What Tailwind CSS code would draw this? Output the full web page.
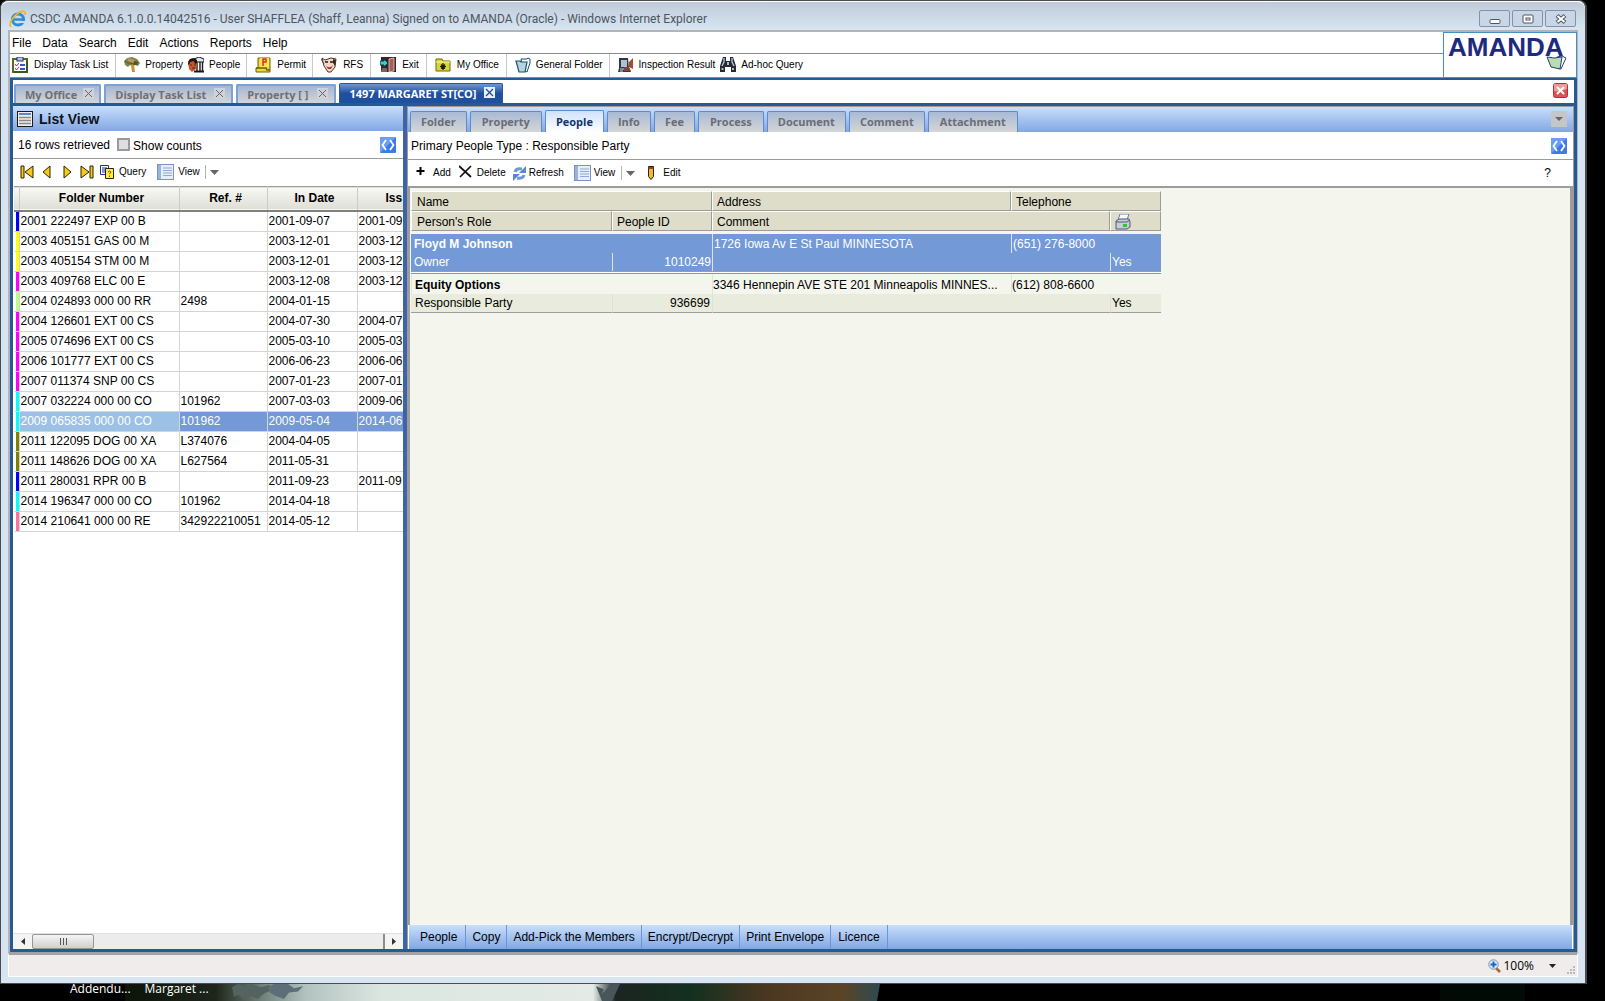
<!DOCTYPE html>
<html lang="en">
  <head>
    <meta charset="UTF-8" />
    <meta name="viewport" content="width=device-width, initial-scale=1.0" />
    <title>CSDC AMANDA 6.1.0.0.14042516</title>
    <script src="https://cdn.jsdelivr.net/npm/@tailwindcss/browser@4"></script>
  </head>

  <body
    class="h-screen overflow-hidden bg-black flex flex-col text-[12px] leading-4 text-black font-['Liberation_Sans',Arial,sans-serif]"
  >
    <!-- Browser window -->
    <div
      class="flex-1 min-h-0 mr-[18px] flex flex-col rounded-t-lg border-2 border-[#4b4b4f] border-b bg-[#d7e4f2] px-[7px] pb-[6px] border-l-1 border-t-1"
    >
      <!-- Title bar -->
      <header
        class="h-[29px] shrink-0 -mx-[7px] px-[8px] flex items-center rounded-t-lg border-t border-white bg-linear-to-b from-[#bfcbd9] to-[#d8e5f2]"
      >
        <svg class="w-[18px] h-[18px] mt-[5px]" viewBox="0 0 18 18">
          <circle cx="9" cy="9.500" r="5.600" fill="none" stroke="#2b8fd8" stroke-width="3" />
          <path d="M5 9.500h10" stroke="#2b8fd8" stroke-width="2.500" />
          <path d="M11 11h6v2h-6z" fill="#cfdbe8" />
          <path d="M2 17C-1 14 4 6 10 2.500C14 .500 17 1 16 5" fill="none" stroke="#f0b51c" stroke-width="1.600" />
        </svg>
        <h1 class="ml-[3px] mt-[5px] text-[12px] text-[#4c5660] font-['Roboto','Open_Sans',sans-serif]">
          CSDC AMANDA 6.1.0.0.14042516 - User SHAFFLEA (Shaff, Leanna) Signed on to AMANDA (Oracle) - Windows Internet Explorer
        </h1>
        <div class="ml-auto mr-[1px] mt-[5px] flex gap-[2px]">
          <button aria-label="Minimize" class="w-[31px] h-[17px] rounded-xs border border-[#8391ab] bg-[#c9d6e6] flex items-center justify-center">
            <svg class="w-[12px] h-[12px]" viewBox="0 0 12 12"><rect x="1" y="6.500" width="10" height="4" rx="1" fill="#fff" stroke="#4d5567" /></svg>
          </button>
          <button aria-label="Maximize" class="w-[31px] h-[17px] rounded-xs border border-[#8391ab] bg-[#c9d6e6] flex items-center justify-center">
            <svg class="w-[12px] h-[12px]" viewBox="0 0 12 12"><rect x="1" y="2" width="10" height="8" rx="1" fill="#fff" stroke="#4d5567" /><rect x="4" y="5" width="4" height="2" fill="#fff" stroke="#4d5567" /></svg>
          </button>
          <button aria-label="Close" class="w-[31px] h-[17px] rounded-xs border border-[#8391ab] bg-[#c9d6e6] flex items-center justify-center">
            <svg class="w-[12px] h-[12px]" viewBox="0 0 12 12"><path d="M2 2.500l8 7M10 2.500l-8 7" stroke="#4d5567" stroke-width="4" /><path d="M2.500 3l7 6M9.500 3l-7 6" stroke="#fff" stroke-width="2" /></svg>
          </button>
        </div>
      </header>

      <!-- Page area -->
      <div class="flex-1 min-h-0 flex flex-col border-2 border-[#b4b3b5] border-b-0 border-r-1 bg-white">
        <!-- Menu + toolbar + logo -->
        <div class="shrink-0 flex">
          <div class="flex-1 min-w-0 flex flex-col">
            <nav class="h-[22px] flex items-center gap-[11px] px-[2px] border-b border-[#6d8fc8]">
              <button>File</button>
              <button>Data</button>
              <button>Search</button>
              <button>Edit</button>
              <button>Actions</button>
              <button>Reports</button>
              <button>Help</button>
            </nav>
            <div class="h-[24px] flex text-[10px] leading-3 border-b border-[#6d8fc8]">
              <div class="flex items-center pb-[2px] pl-[2px] pr-[7px] border-r border-[#c9c9c4]">
                <button class="flex items-center gap-[6px]">
                  <svg class="w-4 h-4" viewBox="0 0 16 16"><rect x="1" y="2" width="14" height="13" fill="#fff" stroke="#4f6b1d" stroke-width="2" /><path d="M2 15h13V3" fill="none" stroke="#1d4a2b" /><rect x="5" y="0" width="6" height="4" fill="#b9c4ef" stroke="#26306b" /><path d="M3 7l1.500 2L7 6M3 11l1.500 2L7 10" fill="none" stroke="#c2267c" /><path d="M8 8h5M8 12h5" stroke="#3a57c4" stroke-width="2" /></svg>
                  Display Task List
                </button>
              </div>
              <div class="flex items-center gap-[5px] pb-[2px] pl-[8px] pr-[6px] border-r border-[#c9c9c4]">
                <button class="flex items-center gap-[5px]">
                  <svg class="w-4 h-4" viewBox="0 0 16 16"><path d="M0 4l3-3 5-1 5 2 3 4-2 3-3-1-2 2-3-2-2 2-3-2z" fill="#758a45" /><path d="M3 1l4 1 4 1-2 3-4-1z" fill="#b99a62" /><path d="M10 4l4 1-1 3-3 0z" fill="#4d5a29" /><path d="M7 8h3l1 7H8z" fill="#d98a33" /><path d="M1 4l3 2 3 0 3 1 4-2" fill="none" stroke="#7c4226" /></svg>
                  Property
                </button>
                <button class="flex items-center gap-[5px]">
                  <svg class="w-4 h-4" viewBox="0 0 16 16"><path d="M6 4V2l5-2 5 2v3H6z" fill="#dfe4ea" stroke="#1a1a1a" /><path d="M9 5v9M12 5v9M14.500 5v9" stroke="#1a1a1a" stroke-width="1.400" /><path d="M6 14.500h10" stroke="#1a1a1a" stroke-width="2" /><path d="M0 6q1-5 6-4 4 1 3 6l-1 4-4 3-3-3z" fill="#c4572d" /><path d="M0 7q0-6 6-6l3 2v3l-2 1-1-3-4 1-1 3z" fill="#1b1310" /><path d="M2 8h2M6 8h2M4 11h3" stroke="#6d1f0c" /></svg>
                  People
                </button>
              </div>
              <div class="flex items-center pb-[2px] pl-[8px] pr-[6px] border-r border-[#c9c9c4]">
                <button class="flex items-center gap-[6px]">
                  <svg class="w-4 h-4" viewBox="0 0 16 16"><path d="M3 1h12v14H1v-4h2z" fill="#e8d838" stroke="#6b6309" /><rect x="5" y="1" width="9" height="9" fill="#f8e75b" /><path d="M8 9V2h3v3H8" fill="none" stroke="#cf3226" stroke-width="1.500" /><path d="M1 11h10l1 2h3" fill="none" stroke="#6b6309" stroke-width="1.500" /></svg>
                  Permit
                </button>
              </div>
              <div class="flex items-center pb-[2px] pl-[8px] pr-[7px] border-r border-[#c9c9c4]">
                <button class="flex items-center gap-[6px]">
                  <svg class="w-4 h-4" viewBox="0 0 16 16"><path d="M1 1l3 2 6-2 5 1-1 8-4 5H7L3 9z" fill="#f4d6c6" stroke="#473830" /><path d="M12 2l3 1-1 6-2-3z" fill="#372a24" /><path d="M4 5h3M9 5h3" stroke="#1a1a1a" stroke-width="1.500" /><path d="M5 9q4 3 7-1l-2 4H7z" fill="#a53528" /><path d="M0 2l3 5" stroke="#5c463a" /></svg>
                  RFS
                </button>
              </div>
              <div class="flex items-center pb-[2px] pl-[9px] pr-[7px] border-r border-[#c9c9c4]">
                <button class="flex items-center gap-[6px]">
                  <svg class="w-4 h-4" viewBox="0 0 16 16"><rect x="1" y="0" width="15" height="15" fill="#3f2127" /><path d="M9 2l5-1v13l-5 1z" fill="#a55f56" stroke="#e8d4cf" stroke-width=".8" /><path d="M0 4h4V2l4 4-4 4V8H0z" fill="#2fd0d6" stroke="#153a3c" /><path d="M2 12h5M1 14h6" stroke="#b9a7a4" /></svg>
                  Exit
                </button>
              </div>
              <div class="flex items-center pb-[2px] pl-[8px] pr-[7px] border-r border-[#c9c9c4]">
                <button class="flex items-center gap-[6px]">
                  <svg class="w-4 h-4" viewBox="0 0 16 16"><path d="M1 2h6l1 2h7v10H1z" fill="#d9d534" stroke="#69660f" /><path d="M1 5h14" stroke="#fbf9a0" /><path d="M8 6v7M5 9.500h6M6 7.500l4 4M10 7.500l-4 4" stroke="#1c1c06" stroke-width="1.200" /></svg>
                  My Office
                </button>
              </div>
              <div class="flex items-center pb-[2px] pl-[8px] pr-[6px] border-r border-[#c9c9c4]">
                <button class="flex items-center gap-[5px]">
                  <svg class="w-4 h-4" viewBox="0 0 16 16"><path d="M6 2h6l1-1 2 1v4l-3 9-4-2z" fill="#f1f7fa" stroke="#20506b" /><path d="M1 4h4l1 1h6l-2 10H4z" fill="#b3d4e0" stroke="#20506b" stroke-width="1.200" /></svg>
                  General Folder
                </button>
              </div>
              <div class="flex items-center gap-[5px] pb-[2px] pl-[8px]">
                <button class="flex items-center gap-[5px]">
                  <svg class="w-4 h-4" viewBox="0 0 16 16"><path d="M1 1h9l1 10 2 4H0l1-4z" fill="#35393f" /><path d="M3 3h6v7H3z" fill="#a9c3d6" /><path d="M11 5l4-4v11l-4-2z" fill="#a34a30" /><path d="M6 10l5 0 2 4H6z" fill="#7b4638" /><path d="M2 12h4M2 14h3" stroke="#d6d6d6" /></svg>
                  Inspection Result
                </button>
                <button class="flex items-center gap-[5px]">
                  <svg class="w-4 h-4" viewBox="0 0 16 16"><path d="M3 0h3v4h4V0h3l3 9v6h-5v-5H5v5H0V9z" fill="#272b31" /><path d="M4 1v4l-2 4M12 1v4l2 4" fill="none" stroke="#b9cad8" stroke-width="1.300" /><path d="M1.500 11h2v2h-2zM12 11h2v2h-2zM7 5h2v3H7z" fill="#a9bccb" /></svg>
                  Ad-hoc Query
                </button>
              </div>
            </div>
          </div>
          <a href="#" aria-label="AMANDA" class="w-[134px] h-[46px] relative border border-[#4590c4] pl-[4px] text-[26px] leading-[28px] font-bold text-[#1d2a7e]">
            AMANDA
            <svg class="absolute right-[9px] top-[22px] w-[21px] h-[16px]" viewBox="0 0 21 16"><path d="M11 2l5-1 4 2-5 11-4-1z" fill="#fff" stroke="#27407c" /><path d="M1 2l7 1 8-1-2 12-9-2z" fill="#b9dcb4" stroke="#27407c" /></svg>
          </a>
        </div>

        <div class="flex-1 min-h-0 flex flex-col border-[3px] border-t-2 border-[#255a93] ">
          <!-- Open documents -->
          <div class="h-[23px] shrink-0 flex items-end gap-[3px] pl-[1px] font-['Open_Sans','Noto_Sans',sans-serif] text-[11px] font-bold text-[#6d7077]">
            <button class="h-[19px] flex items-center gap-[6px] pl-[9px] pr-[5px] rounded-t-xs border-2 border-b-0 border-[#7ba0dc] bg-linear-to-b from-[#a6b7d1] to-[#d4d5d6]">
              My Office
              <svg class="w-[11px] h-[11px] mb-[2px]" viewBox="0 0 11 11"><rect width="11" height="11" fill="#ccd3dc" /><path d="M2 2l7 7M9 2l-7 7" stroke="#666" /></svg>
            </button>
            <button class="h-[19px] flex items-center gap-[8px] pl-[9px] pr-[6px] rounded-t-xs border-2 border-b-0 border-[#7ba0dc] bg-linear-to-b from-[#a6b7d1] to-[#d4d5d6]">
              Display Task List
              <svg class="w-[11px] h-[11px] mb-[2px]" viewBox="0 0 11 11"><rect width="11" height="11" fill="#ccd3dc" /><path d="M2 2l7 7M9 2l-7 7" stroke="#666" /></svg>
            </button>
            <button class="h-[19px] flex items-center gap-[8px] pl-[9px] pr-[6px] rounded-t-xs border-2 border-b-0 border-[#7ba0dc] bg-linear-to-b from-[#a6b7d1] to-[#d4d5d6]">
              Property [ ]
              <svg class="w-[11px] h-[11px] mb-[2px]" viewBox="0 0 11 11"><rect width="11" height="11" fill="#ccd3dc" /><path d="M2 2l7 7M9 2l-7 7" stroke="#666" /></svg>
            </button>
            <button class="h-[20px] flex items-center gap-[8px] pl-[10px] pr-[7px] rounded-t-xs border border-b-0 border-[#255a93] bg-linear-to-b from-[#6f97d4] to-[#1f4f9f] to-50% text-white">
              1497 MARGARET ST[CO]
              <svg class="w-[11px] h-[11px] mb-[2px]" viewBox="0 0 11 11"><rect width="11" height="11" fill="#e8f1fb" /><path d="M2 2l7 7M9 2l-7 7" stroke="#24508f" stroke-width="1.300" /></svg>
            </button>
            <button aria-label="Close document" class="ml-auto mr-[6px] mb-[5px]">
              <svg class="w-[15px] h-[15px]" viewBox="0 0 15 15"><rect x=".5" y=".5" width="14" height="14" rx="2" fill="#dc5257" stroke="#a8343a" /><path d="M1 1h13v5q-6 3-13 2z" fill="#ee9a9c" /><path d="M4 4l7 7M11 4l-7 7" stroke="#fff" stroke-width="2" /></svg>
            </button>
          </div>

          <div class="flex-1 min-h-0 flex border-t-[3px] border-[#255a93]">
            <!-- Left: list view -->
            <section class="w-[390px] shrink-0 flex flex-col min-h-0">
              <div class="h-[25px] shrink-0 flex items-center gap-[6px] pl-[4px] bg-linear-to-b from-[#c9dffb] to-[#82a7e3]">
                <svg class="w-4 h-4" viewBox="0 0 16 16"><rect x=".5" y=".5" width="15" height="15" fill="#eee" stroke="#1b1b1b" /><path d="M2 3h12" stroke="#5a87cc" stroke-width="2" /><path d="M2 6.500h12M2 9.500h12M2 12.500h12" stroke="#8a8a8a" stroke-width="1.500" /></svg>
                <h2 class="text-[14px] font-bold text-[#10131c]">List View</h2>
              </div>
              <div class="h-[28px] shrink-0 flex items-center pl-[5px] pr-[7px] border-b border-[#9b9b9b]">
                <span>16 rows retrieved</span>
                <input id="counts" type="checkbox" class="appearance-none ml-[7px] w-[13px] h-[13px] border-2 border-[#9a9a9a] bg-[#dcdee2]" />
                <label for="counts" class="ml-[3px] mt-[2px]">Show counts</label>
                <button aria-label="Expand list" class="ml-auto">
                  <svg class="w-4 h-4" viewBox="0 0 16 16"><rect width="16" height="16" rx="1" fill="#3b7be8" /><path d="M0 0h16L0 16z" fill="#6a9df3" /><path d="M6 3L2.500 8 6 13M10 3l3.500 5L10 13" fill="none" stroke="#fff" stroke-width="1.800" /></svg>
                </button>
              </div>
              <div class="h-[27px] shrink-0 flex items-center pl-[7px] pb-[1px] text-[10px]">
                <button aria-label="First"><svg class="w-[14px] h-[14px]" viewBox="0 0 14 14"><path d="M1 1h3v12H1z" fill="#f7c918" stroke="#2c2200" /><path d="M13 1v12L5 7z" fill="#f7c918" stroke="#2c2200" /></svg></button>
                <button aria-label="Previous" class="ml-[8px]"><svg class="w-[10px] h-[14px]" viewBox="0 0 10 14"><path d="M8 1v12L1 7z" fill="#f7c918" stroke="#2c2200" /></svg></button>
                <button aria-label="Next" class="ml-[10px]"><svg class="w-[10px] h-[14px]" viewBox="0 0 10 14"><path d="M2 1v12l7-6z" fill="#f7c918" stroke="#2c2200" /></svg></button>
                <button aria-label="Last" class="ml-[8px]"><svg class="w-[14px] h-[14px]" viewBox="0 0 14 14"><path d="M10 1h3v12h-3z" fill="#f7c918" stroke="#2c2200" /><path d="M1 1v12l8-6z" fill="#f7c918" stroke="#2c2200" /></svg></button>
                <button class="ml-[6px] flex items-center gap-[5px]">
                  <svg class="w-[14px] h-[14px]" viewBox="0 0 14 14"><path d="M.5.500h8v9h-8z" fill="#fff" stroke="#1a2bb0" /><path d="M2 3h5M2 5h4M2 7h3" stroke="#1a2bb0" /><path d="M5.500 3.500h8v10h-8z" fill="#ffee3d" stroke="#2a2600" /><path d="M8 7q1.500-2 3 0L9.500 9M9.500 10.500v1.500" fill="none" stroke="#b92b1c" /></svg>
                  Query
                </button>
                <button class="ml-[11px] flex items-center gap-[4px]">
                  <svg class="w-[17px] h-[16px]" viewBox="0 0 17 16"><rect x=".5" y=".5" width="16" height="15" fill="#e6eefc" stroke="#7d93bd" /><path d="M1 1h3v14H1z" fill="#9ab2df" /><path d="M6 4h9M6 6.500h9M6 9h9M6 11.500h9" stroke="#8fa9d8" /></svg>
                  View
                </button>
                <button aria-label="View options" class="ml-[5px] pl-[4px] h-[14px] flex items-center border-l border-[#b5b5b5]">
                  <svg class="w-[9px] h-[5px]" viewBox="0 0 9 5"><path d="M0 0h9L4.500 5z" fill="#666" /></svg>
                </button>
              </div>
              <div class="flex-1 min-h-0 overflow-hidden pl-[1px]">
                <table class="table-fixed border-collapse w-full">
                  <colgroup>
                    <col class="w-[5px]" />
                    <col class="w-[160px]" />
                    <col class="w-[88px]" />
                    <col class="w-[90px]" />
                    <col />
                  </colgroup>
                  <thead>
                    <tr class="h-[24px] bg-linear-to-b from-[#f8f8f4] to-[#dedfd6] border-t border-t-[#9b9b9b] border-b-2 border-b-[#808080]">
                      <th class="border-r border-[#cbccc4]"></th>
                      <th class="p-0 pl-[5px] border-r border-[#cbccc4]">Folder Number</th>
                      <th class="p-0 pl-[5px] border-r border-[#cbccc4]">Ref. #</th>
                      <th class="p-0 pl-[5px] border-r border-[#cbccc4]">In Date</th>
                      <th class="p-0 pl-[28px] text-left whitespace-nowrap overflow-hidden">Iss</th>
                    </tr>
                  </thead>
                  <tbody id="folders"></tbody>
                </table>
              </div>
              <!-- Horizontal scrollbar -->
              <div class="h-[16px] shrink-0 flex bg-[#ececec] border-t border-[#e0e0e0]">
                <button aria-label="Scroll left" class="w-[19px] flex items-center justify-center bg-[#f4f4f4]">
                  <svg class="w-[4px] h-[7px]" viewBox="0 0 4 7"><path d="M4 0v7L0 3.500z" fill="#333" /></svg>
                </button>
                <div class="w-[62px] flex items-center justify-center gap-[2px] rounded-xs border border-[#979797] bg-linear-to-b from-[#f5f5f5] to-[#cfcfcf]">
                  <i class="w-px h-[7px] bg-[#555]"></i><i class="w-px h-[7px] bg-[#555]"></i><i class="w-px h-[7px] bg-[#555]"></i>
                </div>
                <button aria-label="Scroll right" class="ml-auto w-[20px] flex items-center justify-center border-l-2 border-[#8c8c8c] bg-[#f4f4f4]">
                  <svg class="w-[4px] h-[7px]" viewBox="0 0 4 7"><path d="M0 0v7l4-3.500z" fill="#333" /></svg>
                </button>
              </div>
            </section>

            <div class="w-[4px] shrink-0 bg-[#3d63a8]"></div>

            <!-- Right: folder detail -->
            <section class="flex-1 min-w-0 flex flex-col border border-b-0 border-[#9c9c9c]">
              <div class="h-[25px] shrink-0 flex items-end gap-[3px] pl-[2px] pr-[6px] bg-linear-to-b from-[#c9dffb] to-[#82a7e3] font-['Open_Sans','Noto_Sans',sans-serif] text-[11px] font-bold text-[#6a6d74]">
                <button class="h-[21px] px-[10px] rounded-t-xs border border-b-0 border-[#5d8bd0] bg-linear-to-b from-[#a8bad5] to-[#d6d6d6]">Folder</button>
                <button class="h-[21px] px-[11px] rounded-t-xs border border-b-0 border-[#5d8bd0] bg-linear-to-b from-[#a8bad5] to-[#d6d6d6]">Property</button>
                <button class="h-[22px] px-[10px] rounded-t-xs border border-b-0 border-[#5d8bd0] bg-linear-to-b from-[#cfe2fb] to-white text-[#12356f]">People</button>
                <button class="h-[21px] px-[10px] rounded-t-xs border border-b-0 border-[#5d8bd0] bg-linear-to-b from-[#a8bad5] to-[#d6d6d6]">Info</button>
                <button class="h-[21px] px-[10px] rounded-t-xs border border-b-0 border-[#5d8bd0] bg-linear-to-b from-[#a8bad5] to-[#d6d6d6]">Fee</button>
                <button class="h-[21px] px-[11px] rounded-t-xs border border-b-0 border-[#5d8bd0] bg-linear-to-b from-[#a8bad5] to-[#d6d6d6]">Process</button>
                <button class="h-[21px] px-[10px] rounded-t-xs border border-b-0 border-[#5d8bd0] bg-linear-to-b from-[#a8bad5] to-[#d6d6d6]">Document</button>
                <button class="h-[21px] px-[10px] rounded-t-xs border border-b-0 border-[#5d8bd0] bg-linear-to-b from-[#a8bad5] to-[#d6d6d6]">Comment</button>
                <button class="h-[21px] px-[11px] rounded-t-xs border border-b-0 border-[#5d8bd0] bg-linear-to-b from-[#a8bad5] to-[#d6d6d6]">Attachment</button>
                <button aria-label="More tabs" class="ml-auto mb-[5px] w-4 h-4 flex items-center justify-center bg-[#c4c6ca]">
                  <svg class="w-[8px] h-[4px]" viewBox="0 0 8 4"><path d="M0 0h8L4 4z" fill="#666" /></svg>
                </button>
              </div>
              <div class="h-[28px] shrink-0 flex items-center pl-[3px] pr-[6px] border-b border-[#9b9b9b]">
                <span>Primary People Type : Responsible Party</span>
                <button aria-label="Expand detail" class="ml-auto">
                  <svg class="w-4 h-4" viewBox="0 0 16 16"><rect width="16" height="16" rx="1" fill="#3b7be8" /><path d="M0 0h16L0 16z" fill="#6a9df3" /><path d="M6 3L2.500 8 6 13M10 3l3.500 5L10 13" fill="none" stroke="#fff" stroke-width="1.800" /></svg>
                </button>
              </div>
              <div class="h-[26px] shrink-0 flex items-center pl-[8px] text-[10px]">
                <button class="flex items-center gap-[8px]">
                  <svg class="w-[9px] h-[9px] mb-[3px]" viewBox="0 0 9 9"><path d="M4.500 0v8M.5 4h8" stroke="#000" stroke-width="2" /></svg>
                  Add
                </button>
                <button class="ml-[8px] flex items-center gap-[5px]">
                  <svg class="w-[13px] h-[13px] mb-[3px]" viewBox="0 0 13 13"><path d="M0 1l12 11M12 1L1 12" stroke="#111" stroke-width="1.700" /></svg>
                  Delete
                </button>
                <button class="ml-[7px] flex items-center gap-[3px]">
                  <svg class="w-[13px] h-[15px]" viewBox="0 0 13 15"><path d="M2 6q1-4 7-3" fill="none" stroke="#6d97dc" stroke-width="3" /><path d="M13 0v7H6z" fill="#5a87d4" /><path d="M11 9q-1 4-7 3" fill="none" stroke="#6d97dc" stroke-width="3" /><path d="M0 15V8h7z" fill="#5a87d4" /></svg>
                  Refresh
                </button>
                <button class="ml-[10px] flex items-center gap-[3px]">
                  <svg class="w-[17px] h-[16px]" viewBox="0 0 17 16"><rect x=".5" y=".5" width="16" height="15" fill="#e6eefc" stroke="#7d93bd" /><path d="M1 1h3v14H1z" fill="#9ab2df" /><path d="M6 4h9M6 6.500h9M6 9h9M6 11.500h9" stroke="#8fa9d8" /></svg>
                  View
                </button>
                <button aria-label="View options" class="ml-[6px] pl-[4px] h-[14px] flex items-center border-l border-[#b5b5b5]">
                  <svg class="w-[9px] h-[5px]" viewBox="0 0 9 5"><path d="M0 0h9L4.500 5z" fill="#666" /></svg>
                </button>
                <button class="ml-[12px] flex items-center gap-[8px]">
                  <svg class="w-[8px] h-[14px]" viewBox="0 0 8 14"><path d="M1.500.500h5v10L4 13.500l-2.500-3z" fill="#f2b92c" stroke="#222" /><path d="M1.500 1h5v2h-5z" fill="#a13b2a" /></svg>
                  Edit
                </button>
                <button aria-label="Help" class="ml-auto mr-[22px] text-[12px]">?</button>
              </div>

              <div class="flex-1 min-h-0 border-2 border-r-3 border-b-0 border-[#9c9c9c] bg-[#f4f5ec] pt-[3px] pl-[1px]">
                <table class="table-fixed border-separate border-spacing-0 w-[750px] text-left">
                  <colgroup>
                    <col class="w-[201px]" />
                    <col class="w-[100px]" />
                    <col class="w-[299px]" />
                    <col class="w-[99px]" />
                    <col class="w-[51px]" />
                  </colgroup>
                  <thead>
                    <tr class="h-[20px] bg-[#deddc9]">
                      <th colspan="2" class="p-0 pt-[2px] pl-[5px] font-normal border border-t-white border-l-white border-[#9c9c9c]">Name</th>
                      <th class="p-0 pt-[2px] pl-[4px] font-normal border border-t-white border-l-white border-[#9c9c9c]">Address</th>
                      <th colspan="2" class="p-0 pt-[2px] pl-[4px] font-normal border border-t-white border-l-white border-[#9c9c9c]">Telephone</th>
                    </tr>
                    <tr class="h-[20px] bg-[#deddc9]">
                      <th class="p-0 pt-[2px] pl-[5px] font-normal border border-t-white border-l-white border-[#9c9c9c]">Person's Role</th>
                      <th class="p-0 pt-[2px] pl-[4px] font-normal border border-t-white border-l-white border-[#9c9c9c]">People ID</th>
                      <th colspan="2" class="p-0 pt-[2px] pl-[4px] font-normal border border-t-white border-l-white border-[#9c9c9c]">Comment</th>
                      <th class="p-0 pt-[2px] pl-[4px] border border-t-white border-l-white border-[#9c9c9c]">
                        <svg class="w-4 h-4" viewBox="0 0 16 16"><path d="M5 0h9l-2 6H3z" fill="#f6f9ff" stroke="#6c7e9a" /><path d="M1 7l3-2h10l1 3v5l-3 2H1z" fill="#c6cdd9" stroke="#4e5b73" /><path d="M1 8h11l3-2" fill="none" stroke="#4e5b73" /><rect x="8" y="10" width="4" height="3" fill="#35c52f" /></svg>
                      </th>
                    </tr>
                  </thead>
                  <tbody>
                    <tr><td colspan="5" class="h-[3px] p-0"></td></tr>
                    <tr class="h-[19px] bg-[#7399d6] text-white">
                      <td colspan="2" class="p-0 pl-[3px] font-bold">Floyd M Johnson</td>
                      <td class="p-0 pl-[1px] border-l border-[#dfe3e6]">1726 Iowa Av E St Paul MINNESOTA</td>
                      <td colspan="2" class="p-0 pl-[1px] border-l border-[#dfe3e6]">(651) 276-8000</td>
                    </tr>
                    <tr class="h-[18px] bg-[#7399d6] text-white">
                      <td class="p-0 pl-[3px]">Owner</td>
                      <td class="p-0 pr-[1px] text-right border-l border-[#dfe3e6]">1010249</td>
                      <td colspan="2" class="p-0 border-l border-[#dfe3e6]"></td>
                      <td class="p-0 pl-[1px] border-l border-[#dfe3e6]">Yes</td>
                    </tr>
                    <tr><td colspan="5" class="h-[3px] p-0 bg-white border-y border-t-[#9c9c9c] border-b-[#7399d6]"></td></tr>
                    <tr class="h-[20px]">
                      <td colspan="2" class="p-0 pt-[2px] pl-[3px] font-bold border-l border-[#e2e4da]">Equity Options</td>
                      <td class="p-0 pt-[2px] border-l border-[#e2e4da] whitespace-nowrap overflow-hidden">3346 Hennepin AVE STE 201 Minneapolis MINNES...</td>
                      <td colspan="2" class="p-0 pt-[2px] border-l border-[#e2e4da]">(612) 808-6600</td>
                    </tr>
                    <tr class="h-[19px] bg-[#e9ecdc]">
                      <td class="p-0 pl-[4px] border-b border-b-[#9c9c9c]">Responsible Party</td>
                      <td class="p-0 pr-[2px] text-right border-l border-b border-[#dfe1d5] border-b-[#9c9c9c]">936699</td>
                      <td colspan="2" class="p-0 border-l border-b border-[#dfe1d5] border-b-[#9c9c9c]"></td>
                      <td class="p-0 pl-[1px] border-l border-b border-[#dfe1d5] border-b-[#9c9c9c]">Yes</td>
                    </tr>
                  </tbody>
                </table>
              </div>

              <!-- Bottom actions -->
              <div class="h-[24px] shrink-0 flex mx-[1px] pl-[2px] bg-linear-to-b from-[#c9dffb] to-[#82a7e3]">
                <button class="pl-[9px] pr-[8px] border-r border-[#6d95d6]">People</button>
                <button class="px-[6px] border-r border-[#6d95d6]">Copy</button>
                <button class="px-[6px] border-r border-[#6d95d6]">Add-Pick the Members</button>
                <button class="px-[6px] border-r border-[#6d95d6]">Encrypt/Decrypt</button>
                <button class="px-[6px] border-r border-[#6d95d6]">Print Envelope</button>
                <button class="px-[7px] border-r border-[#6d95d6]">Licence</button>
              </div>
            </section>
          </div>
        </div>
      </div>

      <!-- Status bar -->
      <footer class="h-[25px] shrink-0 flex items-center justify-end pr-[2px] border border-white border-t-3 border-t-[#a3a2a5] bg-[#f0eceb] font-['Open_Sans','Noto_Sans',sans-serif] text-[12px]">
        <button class="flex items-center gap-[2px]">
          <svg class="w-[13px] h-[14px]" viewBox="0 0 13 14"><path d="M8 9l4 4" stroke="#a8662e" stroke-width="2.500" /><circle cx="5.500" cy="5.500" r="4.700" fill="#d9ecfa" stroke="#7f93a8" /><path d="M5.500 2.500v6M2.500 5.500h6" stroke="#1c66c8" stroke-width="2" /></svg>
          100%
        </button>
        <button aria-label="Zoom level" class="ml-[15px] mr-[11px]">
          <svg class="w-[7px] h-[4px]" viewBox="0 0 7 4"><path d="M0 0h7L3.500 4z" fill="#222" /></svg>
        </button>
        <svg class="w-[8px] h-[8px] self-end mb-[2px]" viewBox="0 0 8 8"><path d="M6 0h2v2H6zM3 3h2v2H3zM6 3h2v2H6zM0 6h2v2H0zM3 6h2v2H3zM6 6h2v2H6z" fill="#bdb9b8" /></svg>
      </footer>
    </div>

    <!-- Desktop behind the window -->
    <div class="h-[17px] shrink-0 relative overflow-hidden">
      <svg class="absolute inset-0 w-full h-full" viewBox="0 0 1605 16" preserveAspectRatio="none">
        <defs>
          <linearGradient id="sky" x1="0" x2="1">
            <stop offset="0" stop-color="#0c1309" />
            <stop offset=".12" stop-color="#1d261a" />
            <stop offset=".18" stop-color="#6e7e78" />
            <stop offset=".24" stop-color="#b3c3c0" />
            <stop offset=".34" stop-color="#dbe6e1" />
            <stop offset=".62" stop-color="#e4ebe6" />
            <stop offset=".65" stop-color="#1c2421" />
            <stop offset=".75" stop-color="#14301f" />
            <stop offset=".85" stop-color="#4b3622" />
            <stop offset=".95" stop-color="#5b4425" />
            <stop offset="1" stop-color="#2d4a52" />
          </linearGradient>
        </defs>
        <path d="M125 0h755l-3 16H125z" fill="url(#sky)" />
        <path d="M232 3l6-3 8 3 6-3 9 3 8-2 5 4-10 4-6 5-8-3-6 4-6-5-4 2z" fill="#54635f" />
        <path d="M268 3l6-3h14l6 4 9-2-5 5-9 1-5 6-9-3-5-3z" fill="#5d6e78" />
        <path d="M596 2l8 3-2 4 10-9h8l-8 16h-10z" fill="#48565a" />
        <path d="M1440 0h85v16h-85z" fill="#020a05" />
      </svg>
      <div class="relative flex gap-[14px] pl-[70px] leading-[10px] text-[12px] text-white font-['Open_Sans','Noto_Sans',sans-serif]">
        <span>Addendu...</span>
        <span>Margaret ...</span>
      </div>
    </div>

    <script>
      // color, folder number, ref, in date, issue date
      const folders = [
        ["bg-[#0000ff]", "2001 222497 EXP 00 B", "", "2001-09-07", "2001-09"],
        ["bg-[#ffff00]", "2003 405151 GAS 00 M", "", "2003-12-01", "2003-12"],
        ["bg-[#ffff00]", "2003 405154 STM 00 M", "", "2003-12-01", "2003-12"],
        ["bg-[#ff00ff]", "2003 409768 ELC 00 E", "", "2003-12-08", "2003-12"],
        ["bg-[#b8ff80]", "2004 024893 000 00 RR", "2498", "2004-01-15", ""],
        ["bg-[#ff00ff]", "2004 126601 EXT 00 CS", "", "2004-07-30", "2004-07"],
        ["bg-[#ff00ff]", "2005 074696 EXT 00 CS", "", "2005-03-10", "2005-03"],
        ["bg-[#ff00ff]", "2006 101777 EXT 00 CS", "", "2006-06-23", "2006-06"],
        ["bg-[#ff00ff]", "2007 011374 SNP 00 CS", "", "2007-01-23", "2007-01"],
        ["bg-[#00ffff]", "2007 032224 000 00 CO", "101962", "2007-03-03", "2009-06"],
        ["bg-[#00ffff]", "2009 065835 000 00 CO", "101962", "2009-05-04", "2014-06"],
        ["bg-[#808000]", "2011 122095 DOG 00 XA", "L374076", "2004-04-05", ""],
        ["bg-[#808000]", "2011 148626 DOG 00 XA", "L627564", "2011-05-31", ""],
        ["bg-[#0000ff]", "2011 280031 RPR 00 B", "", "2011-09-23", "2011-09"],
        ["bg-[#00ffff]", "2014 196347 000 00 CO", "101962", "2014-04-18", ""],
        ["bg-[#ff70a0]", "2014 210641 000 00 RE", "342922210051", "2014-05-12", ""],
      ];
      const selected = 10;

      document.getElementById("folders").innerHTML = folders
        .map((f, i) => {
          const sel = i === selected;
          const cell = "p-0 pl-[1px] border-r border-b border-[#d4d4d4] whitespace-nowrap";
          const last = "p-0 pl-[1px] border-b border-[#d4d4d4] whitespace-nowrap overflow-hidden";
          const row = sel ? "h-[20px] bg-[#7399d6] text-white" : "h-[20px]";
          const first = sel ? " bg-[#9bc1e6]" : "";
          return `<tr class="${row}">
            <td class="p-0 pl-[2px] bg-white border-r border-b border-[#d4d4d4]"><div class="h-[19px] ${f[0]}"></div></td>
            <td class="${cell}${first}">${f[1]}</td>
            <td class="${cell}">${f[2]}</td>
            <td class="${cell}">${f[3]}</td>
            <td class="${last}">${f[4]}</td>
          </tr>`;
        })
        .join("");
    </script>
  </body>
</html>
